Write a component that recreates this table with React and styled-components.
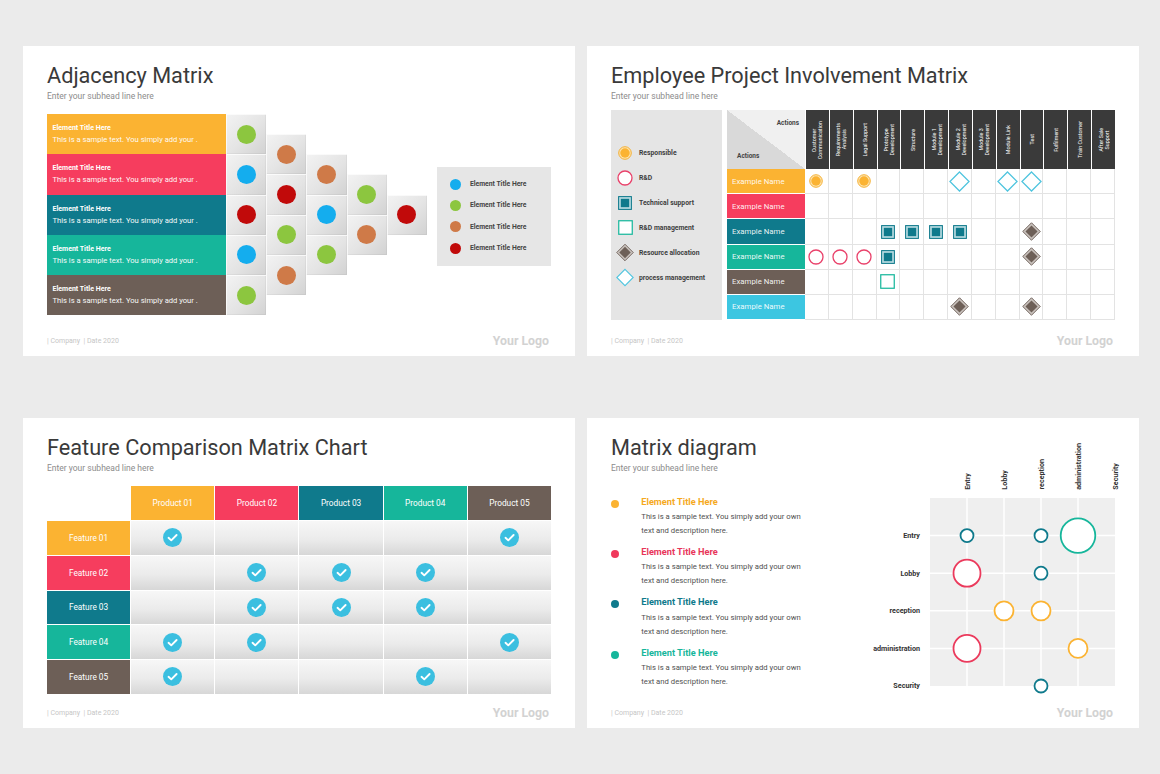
import React from 'react';
import styled, { createGlobalStyle } from 'styled-components';

const C = {
  orange: '#FBB332',
  pink: '#F63D5E',
  teal: '#0F7A8C',
  green: '#16B69B',
  brown: '#6D5F57',
  sky: '#3CC6E1',
  check: '#3BBFE0',
};

const Global = createGlobalStyle`
  html, body { margin: 0; padding: 0; background: #ebebeb; }
  body { font-family: Roboto, "Liberation Sans", Arial, sans-serif; }
  * { box-sizing: border-box; }
`;

const Page = styled.div`
  width: 1160px;
  height: 774px;
  display: grid;
  grid-template-columns: 552px 552px;
  grid-template-rows: 310px 310px;
  column-gap: 12px;
  row-gap: 62px;
  padding: 46px 0 0 23px;
  background: #ebebeb;
`;

const Slide = styled.section`
  background: #fff;
  display: flex;
  flex-direction: column;
  padding: 0 24px;
  overflow: hidden;
`;

const Title = styled.h1`
  margin: 18px 0 0;
  font-weight: 400;
  font-size: 21.7px;
  line-height: 24px;
  color: #3a3a3a;
  white-space: nowrap;
`;

const Sub = styled.div`
  margin-top: 2px;
  font-size: 8.5px;
  line-height: 12px;
  color: #8c8c8c;
`;

const Main = styled.div`
  flex: 1;
  min-height: 0;
  display: flex;
  align-items: flex-start;
  padding-top: ${(p) => p.$top || 0}px;
`;

const Footer = styled.footer`
  height: 20px;
  margin-bottom: 5px;
  display: flex;
  align-items: center;
  justify-content: space-between;
`;

const FootText = styled.span`
  font-size: 7px;
  color: #c6c6c6;
`;

const Logo = styled.span`
  font-size: 12.3px;
  font-weight: 700;
  color: #d2d2d2;
  margin-right: 2px;
`;

const SlideFooter = () => (
  <Footer>
    <FootText>| Company &nbsp;| Date 2020</FootText>
    <Logo>Your Logo</Logo>
  </Footer>
);

/* ---------- Slide 1: Adjacency Matrix ---------- */

const AdjBlock = styled.div`
  display: flex;
  align-items: center;
  height: 201.25px;
`;

const AdjList = styled.div`
  width: 179px;
  display: flex;
  flex-direction: column;
`;

const AdjRow = styled.div`
  height: 40.25px;
  background: ${(p) => p.$bg};
  color: #fff;
  display: flex;
  flex-direction: column;
  justify-content: center;
  padding-left: 5.5px;
`;

const AdjTitle = styled.div`
  font-size: 7px;
  font-weight: 700;
  line-height: 11px;
`;

const AdjText = styled.div`
  font-size: 7.6px;
  line-height: 11px;
  white-space: nowrap;
  opacity: 0.95;
`;

const Stairs = styled.div`
  display: flex;
  height: 201.25px;
`;

const TileCol = styled.div`
  display: flex;
  flex-direction: column;
  justify-content: center;
`;

const Tile = styled.div`
  width: 40.2px;
  height: 40.25px;
  display: flex;
  align-items: center;
  justify-content: center;
  background: linear-gradient(135deg, #f3f3f3 0%, #e4e4e4 55%, #d2d2d2 100%);
  box-shadow: inset 1px 1px 0 rgba(255, 255, 255, 0.7), inset -1px -1px 0 rgba(0, 0, 0, 0.04);
`;

const Dot = styled.span`
  display: block;
  width: ${(p) => p.$size || 19}px;
  height: ${(p) => p.$size || 19}px;
  border-radius: 50%;
  background: ${(p) => p.$c};
  flex: none;
`;

const AdjLegend = styled.div`
  margin: 3px 0 0 10px;
  width: 114px;
  height: 99px;
  background: #e6e6e6;
  display: flex;
  flex-direction: column;
  justify-content: center;
  padding-left: 13.5px;
`;

const LegendItem = styled.div`
  height: 21.3px;
  display: flex;
  align-items: center;
  gap: 8.5px;
  font-size: 6.8px;
  font-weight: 700;
  color: #444;
`;

const dotColor = { g: '#8CC63F', b: '#14ADEE', o: '#CF7A48', r: '#C10A0A' };
const adjRows = [C.orange, C.pink, C.teal, C.green, C.brown];
const tileCols = [
  ['g', 'b', 'r', 'b', 'g'],
  ['o', 'r', 'g', 'o'],
  ['o', 'b', 'g'],
  ['g', 'o'],
  ['r'],
];

const AdjacencySlide = () => (
  <Slide>
    <Title>Adjacency Matrix</Title>
    <Sub>Enter your subhead line here</Sub>
    <Main $top={12}>
      <AdjBlock>
        <AdjList>
          {adjRows.map((c, i) => (
            <AdjRow key={i} $bg={c}>
              <AdjTitle>Element Title Here</AdjTitle>
              <AdjText>This is a sample text. You simply add your .</AdjText>
            </AdjRow>
          ))}
        </AdjList>
        <Stairs>
          {tileCols.map((col, ci) => (
            <TileCol key={ci}>
              {col.map((d, di) => (
                <Tile key={di}>
                  <Dot $c={dotColor[d]} />
                </Tile>
              ))}
            </TileCol>
          ))}
        </Stairs>
        <AdjLegend>
          {['b', 'g', 'o', 'r'].map((d) => (
            <LegendItem key={d}>
              <Dot $c={dotColor[d]} $size={11} />
              Element Title Here
            </LegendItem>
          ))}
        </AdjLegend>
      </AdjBlock>
    </Main>
    <SlideFooter />
  </Slide>
);

/* ---------- Slide 2: Employee Project Involvement ---------- */

const MarkIcon = ({ kind }) => {
  switch (kind) {
    case 'resp':
      return (
        <svg width="14" height="14" viewBox="0 0 16 16">
          <circle cx="8" cy="8" r="7.2" fill="#fde4b0" stroke="#f4a81f" strokeWidth="1" />
          <circle cx="8" cy="8" r="5.4" fill="#fbb332" />
        </svg>
      );
    case 'rd':
      return (
        <svg width="16" height="16" viewBox="0 0 16 16">
          <circle cx="8" cy="8" r="7" fill="#fff" stroke="#e9416a" strokeWidth="1.3" />
        </svg>
      );
    case 'tech':
      return (
        <svg width="14" height="14" viewBox="0 0 16 16">
          <rect x="0.7" y="0.7" width="14.6" height="14.6" fill="#b9dce2" stroke="#0f7a8c" strokeWidth="1.2" />
          <rect x="3.2" y="3.2" width="9.6" height="9.6" fill="#0f7a8c" />
        </svg>
      );
    case 'mgmt':
      return (
        <svg width="15" height="15" viewBox="0 0 16 16">
          <rect x="0.8" y="0.8" width="14.4" height="14.4" fill="#fff" stroke="#16b69b" strokeWidth="1.3" />
        </svg>
      );
    case 'res':
      return (
        <svg width="19" height="19" viewBox="0 0 20 20">
          <polygon points="10,0.8 19.2,10 10,19.2 0.8,10" fill="#c9c2bd" stroke="#6d5f57" strokeWidth="1" />
          <polygon points="10,3.6 16.4,10 10,16.4 3.6,10" fill="#6d5f57" />
        </svg>
      );
    case 'proc':
      return (
        <svg width="21" height="21" viewBox="0 0 22 22">
          <polygon points="11,1 21,11 11,21 1,11" fill="#fff" stroke="#4ec4de" strokeWidth="1.3" />
        </svg>
      );
    default:
      return null;
  }
};

const KeyPanel = styled.div`
  width: 112px;
  height: 210px;
  background: #e5e5e5;
  padding: 30px 0 0 5px;
  display: flex;
  flex-direction: column;
`;

const KeyItem = styled.div`
  height: 25px;
  display: flex;
  align-items: center;
  gap: 5px;
  font-size: 6.8px;
  font-weight: 700;
  color: #3d3d3d;
  white-space: nowrap;
`;

const KeyIcon = styled.span`
  width: 18px;
  display: flex;
  justify-content: center;
  align-items: center;
`;

const Matrix = styled.div`
  margin-left: 5px;
  display: grid;
  grid-template-columns: 78px repeat(13, 23.85px);
  grid-template-rows: 59.3px repeat(6, 25.1px);
`;

const Corner = styled.div`
  background: linear-gradient(to top right, #d9d9d9 50%, #f0f0f0 50%);
  display: flex;
  flex-direction: column;
  justify-content: space-between;
  padding: 9px 6px 9px 10px;
  font-size: 6.5px;
  font-weight: 700;
  color: #444;
`;

const CornerTop = styled.span`
  align-self: flex-end;
`;

const ColHead = styled.div`
  background: #3a3a3a;
  border-left: 1px solid #fff;
  display: flex;
  align-items: center;
  justify-content: center;
  overflow: hidden;
`;

const ColText = styled.span`
  writing-mode: vertical-rl;
  transform: rotate(180deg);
  font-size: 5.4px;
  line-height: 6px;
  color: #fff;
  text-align: center;
  white-space: nowrap;
`;

const NameCell = styled.div`
  background: ${(p) => p.$bg};
  border-bottom: 1px solid #fff;
  display: flex;
  align-items: center;
  padding-left: 5px;
  font-size: 7.8px;
  color: rgba(255, 255, 255, 0.92);
  white-space: nowrap;
`;

const MCell = styled.div`
  border-right: 1px solid #e3e3e3;
  border-bottom: 1px solid #e3e3e3;
  display: flex;
  align-items: center;
  justify-content: center;
  overflow: visible;
`;

const empCols = [
  ['Customer', 'Communication'],
  ['Requirements', 'Analysis'],
  ['Legal Support'],
  ['Prototype', 'Development'],
  ['Structure'],
  ['Module 1', 'Development'],
  ['Module 2', 'Development'],
  ['Module 3', 'Development'],
  ['Module Link'],
  ['Test'],
  ['Fulfilment'],
  ['Train Customer'],
  ['After Sale', 'Support'],
];

const empRows = [
  { color: C.orange, cells: { 0: 'resp', 2: 'resp', 6: 'proc', 8: 'proc', 9: 'proc' } },
  { color: C.pink, cells: {} },
  { color: C.teal, cells: { 3: 'tech', 4: 'tech', 5: 'tech', 6: 'tech', 9: 'res' } },
  { color: C.green, cells: { 0: 'rd', 1: 'rd', 2: 'rd', 3: 'tech', 9: 'res' } },
  { color: C.brown, cells: { 3: 'mgmt' } },
  { color: C.sky, cells: { 6: 'res', 9: 'res' } },
];

const keyItems = [
  ['resp', 'Responsible'],
  ['rd', 'R&D'],
  ['tech', 'Technical support'],
  ['mgmt', 'R&D management'],
  ['res', 'Resource allocation'],
  ['proc', 'process management'],
];

const EmployeeSlide = () => (
  <Slide>
    <Title>Employee Project Involvement Matrix</Title>
    <Sub>Enter your subhead line here</Sub>
    <Main $top={8}>
      <KeyPanel>
        {keyItems.map(([k, label]) => (
          <KeyItem key={k}>
            <KeyIcon>
              <MarkIcon kind={k} />
            </KeyIcon>
            {label}
          </KeyItem>
        ))}
      </KeyPanel>
      <Matrix>
        <Corner>
          <CornerTop>Actions</CornerTop>
          <span>Actions</span>
        </Corner>
        {empCols.map((lines, i) => (
          <ColHead key={i}>
            <ColText>
              {lines.map((l, j) => (
                <React.Fragment key={j}>
                  {j > 0 && <br />}
                  {l}
                </React.Fragment>
              ))}
            </ColText>
          </ColHead>
        ))}
        {empRows.map((row, ri) => (
          <React.Fragment key={ri}>
            <NameCell $bg={row.color}>Example Name</NameCell>
            {empCols.map((_, ci) => (
              <MCell key={ci}>{row.cells[ci] && <MarkIcon kind={row.cells[ci]} />}</MCell>
            ))}
          </React.Fragment>
        ))}
      </Matrix>
    </Main>
    <SlideFooter />
  </Slide>
);

/* ---------- Slide 3: Feature Comparison ---------- */

const FTable = styled.div`
  width: 504px;
  display: grid;
  grid-template-columns: repeat(6, 1fr);
  grid-template-rows: 34px repeat(5, 33.75px);
  gap: 1px;
`;

const FHead = styled.div`
  background: ${(p) => p.$bg || 'transparent'};
  color: #fff;
  font-size: 8.3px;
  display: flex;
  align-items: center;
  justify-content: center;
`;

const FCell = styled.div`
  background: linear-gradient(180deg, #f7f7f7 0%, #ebebeb 55%, #d7d7d7 100%);
  display: flex;
  align-items: center;
  justify-content: center;
`;

const CheckMark = () => (
  <svg width="19" height="19" viewBox="0 0 20 20">
    <circle cx="10" cy="10" r="10" fill={C.check} />
    <path d="M5.8 10.3 L8.7 13 L14.3 7.4" fill="none" stroke="#fff" strokeWidth="2" strokeLinecap="round" strokeLinejoin="round" />
  </svg>
);

const products = [
  ['Product 01', C.orange],
  ['Product 02', C.pink],
  ['Product 03', C.teal],
  ['Product 04', C.green],
  ['Product 05', C.brown],
];

const features = [
  { name: 'Feature 01', color: C.orange, checks: [0, 4] },
  { name: 'Feature 02', color: C.pink, checks: [1, 2, 3] },
  { name: 'Feature 03', color: C.teal, checks: [1, 2, 3] },
  { name: 'Feature 04', color: C.green, checks: [0, 1, 4] },
  { name: 'Feature 05', color: C.brown, checks: [0, 3] },
];

const FeatureSlide = () => (
  <Slide>
    <Title>Feature Comparison Matrix Chart</Title>
    <Sub>Enter your subhead line here</Sub>
    <Main $top={12}>
      <FTable>
        <FHead />
        {products.map(([name, c]) => (
          <FHead key={name} $bg={c}>
            {name}
          </FHead>
        ))}
        {features.map((f) => (
          <React.Fragment key={f.name}>
            <FHead $bg={f.color}>{f.name}</FHead>
            {products.map((_, pi) => (
              <FCell key={pi}>{f.checks.includes(pi) && <CheckMark />}</FCell>
            ))}
          </React.Fragment>
        ))}
      </FTable>
    </Main>
    <SlideFooter />
  </Slide>
);

/* ---------- Slide 4: Matrix diagram ---------- */

const Split = styled.div`
  flex: 1;
  min-height: 0;
  display: flex;
`;

const LeftCol = styled.div`
  flex: 1;
  display: flex;
  flex-direction: column;
`;

const List = styled.div`
  margin-top: 21.7px;
  display: flex;
  flex-direction: column;
  gap: 8px;
`;

const ListItem = styled.div`
  display: flex;
  align-items: flex-start;
`;

const ListDot = styled.span`
  width: 8px;
  height: 8px;
  border-radius: 50%;
  background: ${(p) => p.$c};
  margin-top: 4px;
  flex: none;
`;

const ListBody = styled.div`
  margin-left: 22.3px;
`;

const ListTitle = styled.div`
  font-size: 9.2px;
  line-height: 12px;
  font-weight: 700;
  color: ${(p) => p.$c};
`;

const ListText = styled.div`
  margin-top: 2.3px;
  font-size: 7.7px;
  line-height: 14px;
  color: #505050;
`;

const Chart = styled.div`
  margin-top: 20px;
  display: grid;
  grid-template-columns: 80px 185px;
  grid-template-rows: 60px 188px;
  column-gap: 10px;
`;

const ColLabels = styled.div`
  display: grid;
  grid-template-columns: repeat(5, 37px);
  padding-left: 18.5px;
`;

const ColLabel = styled.span`
  justify-self: center;
  align-self: end;
  margin-bottom: 8px;
  writing-mode: vertical-rl;
  transform: rotate(180deg);
  font-size: 7.2px;
  font-weight: 700;
  color: #333;
  white-space: nowrap;
`;

const RowLabels = styled.div`
  display: grid;
  grid-template-rows: repeat(5, 37.6px);
  padding-top: 18.8px;
`;

const RowLabel = styled.span`
  align-self: center;
  text-align: right;
  font-size: 7.2px;
  font-weight: 700;
  color: #333;
  white-space: nowrap;
`;

const Plot = styled.svg`
  display: block;
  overflow: visible;
`;

const axis = ['Entry', 'Lobby', 'reception', 'administration', 'Security'];
const CW = 37;
const RH = 37.6;
const bubbles = [
  { r: 0, c: 0, rad: 6.5, col: C.teal },
  { r: 0, c: 2, rad: 6.5, col: C.teal },
  { r: 0, c: 3, rad: 17.3, col: C.green },
  { r: 1, c: 0, rad: 13.5, col: '#EB3A5C' },
  { r: 1, c: 2, rad: 6.5, col: C.teal },
  { r: 2, c: 1, rad: 9.5, col: C.orange },
  { r: 2, c: 2, rad: 9.5, col: C.orange },
  { r: 3, c: 0, rad: 13.5, col: '#EB3A5C' },
  { r: 3, c: 3, rad: 9.5, col: C.orange },
  { r: 4, c: 2, rad: 6.5, col: C.teal },
];

const listItems = [
  ['#FBB332', '#F5A91E'],
  ['#F0395C', '#E8365A'],
  [C.teal, C.teal],
  [C.green, C.green],
];

const MatrixDiagramSlide = () => (
  <Slide>
    <Split>
      <LeftCol>
        <Title>Matrix diagram</Title>
        <Sub>Enter your subhead line here</Sub>
        <List>
          {listItems.map(([dot, text], i) => (
            <ListItem key={i}>
              <ListDot $c={dot} />
              <ListBody>
                <ListTitle $c={text}>Element Title Here</ListTitle>
                <ListText>
                  This is a sample text. You simply add your own
                  <br />
                  text and description here.
                </ListText>
              </ListBody>
            </ListItem>
          ))}
        </List>
      </LeftCol>
      <Chart>
        <span />
        <ColLabels>
          {axis.map((a) => (
            <ColLabel key={a}>{a}</ColLabel>
          ))}
        </ColLabels>
        <RowLabels>
          {axis.map((a) => (
            <RowLabel key={a}>{a}</RowLabel>
          ))}
        </RowLabels>
        <Plot width="185" height="188" viewBox="0 0 185 188">
          <rect x="0" y="0" width="185" height="188" fill="#efefef" />
          {[1, 2, 3, 4].map((i) => (
            <line key={'v' + i} x1={CW * i} y1="0" x2={CW * i} y2="188" stroke="#fff" strokeWidth="1.5" />
          ))}
          {[1, 2, 3, 4].map((i) => (
            <line key={'h' + i} x1="0" y1={RH * i} x2="185" y2={RH * i} stroke="#fff" strokeWidth="1.5" />
          ))}
          {bubbles.map((b, i) => (
            <circle
              key={i}
              cx={CW * (b.c + 1)}
              cy={RH * (b.r + 1)}
              r={b.rad}
              fill="#fff"
              stroke={b.col}
              strokeWidth="1.8"
            />
          ))}
        </Plot>
      </Chart>
    </Split>
    <SlideFooter />
  </Slide>
);

export default function App() {
  return (
    <>
      <Global />
      <Page>
        <AdjacencySlide />
        <EmployeeSlide />
        <FeatureSlide />
        <MatrixDiagramSlide />
      </Page>
    </>
  );
}
